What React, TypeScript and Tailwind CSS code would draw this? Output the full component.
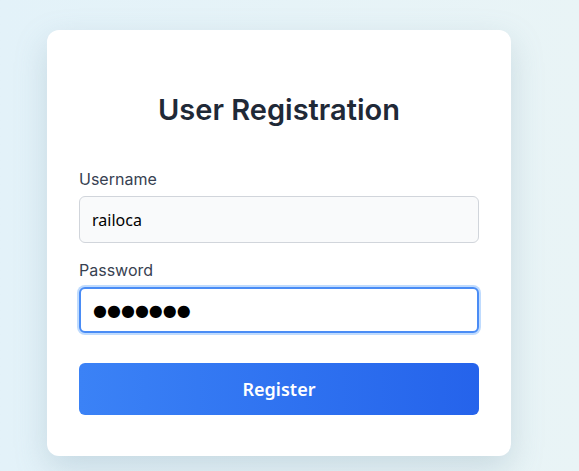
import { useState } from "react";

export default function App() {
  const [username, setUsername] = useState("railoca");
  const [password, setPassword] = useState("●●●●●●●");

  return (
    <div className="min-h-screen bg-gradient-to-r from-[#e3f2f9] to-[#e9f4f6] pl-[47px] pt-[30px] font-['Noto_Sans',sans-serif]">
      <div className="w-[464px] h-[426px] bg-white rounded-xl shadow-[0_12px_32px_rgba(120,150,170,0.28)] px-8 pt-[64px]">
        <h2 className="text-center text-[29px] leading-8 font-semibold text-[#1f2937] font-['Inter',sans-serif]">
          User Registration
        </h2>

        <form className="mt-[43px]" onSubmit={(e) => e.preventDefault()}>
          <label className="block text-base leading-5 text-[#374151] mb-[7px] font-['Inter',sans-serif]">
            Username
          </label>
          <input
            value={username}
            onChange={(e) => setUsername(e.target.value)}
            className="w-full h-[47px] rounded-md border border-[#d1d5db] bg-[#f9fafb] px-3 text-base text-black outline-none"
          />

          <label className="block text-base leading-5 text-[#374151] mt-[17px] mb-[7px] font-['Inter',sans-serif]">
            Password
          </label>
          <input
            value={password}
            onChange={(e) => setPassword(e.target.value)}
            className="w-full h-[46px] rounded-md border-2 border-[#4a8cf5] ring-2 ring-[#bfdbfe] bg-white px-3 text-base text-black font-['DejaVu_Sans',sans-serif] outline-none"
          />

          <button
            type="submit"
            className="mt-[30px] w-full h-[52px] rounded-md bg-gradient-to-r from-[#3b82f6] to-[#2563eb] text-white text-lg font-semibold"
          >
            Register
          </button>
        </form>
      </div>
    </div>
  );
}
